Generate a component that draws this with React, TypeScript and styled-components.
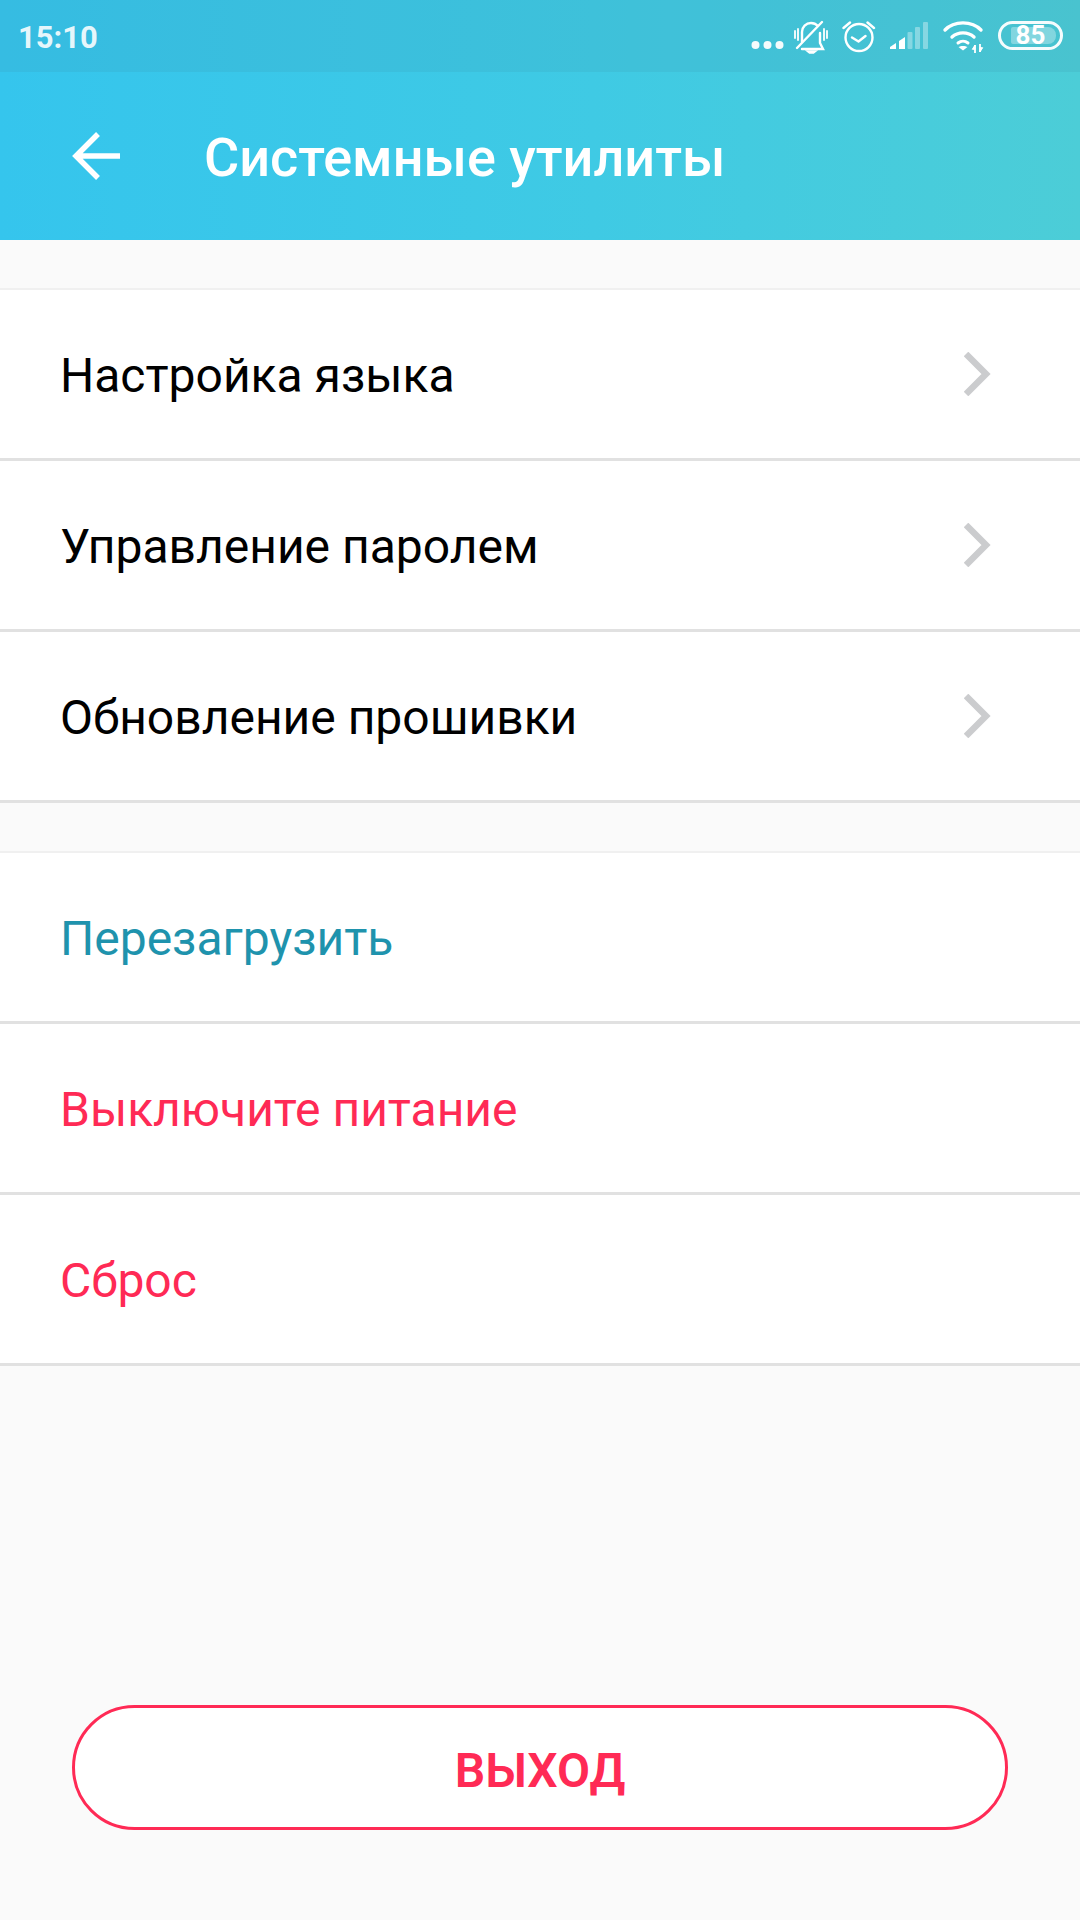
import styled, { createGlobalStyle } from 'styled-components';

const GlobalStyle = createGlobalStyle`
	html, body {
		margin: 0;
		padding: 0;
		background: #fafafa;
	}
	* {
		box-sizing: border-box;
	}
`;

const Screen = styled.div`
	width: 1080px;
	height: 1920px;
	display: flex;
	flex-direction: column;
	background: #fafafa;
	font-family: Roboto, sans-serif;
	overflow: hidden;
`;

const Top = styled.div`
	background: linear-gradient(90deg, #35c5ed 0%, #3fcae4 55%, #4ccdd7 100%);
	color: #fff;
`;

const StatusBar = styled.div`
	height: 72px;
	display: flex;
	align-items: center;
	justify-content: space-between;
	padding: 0 17px 0 18px;
	background: rgba(60, 150, 170, 0.17);
`;

const Clock = styled.span`
	font-size: 31px;
	font-weight: 700;
	color: rgba(255, 255, 255, 0.88);
	padding-top: 2px;
`;

const StatusIcons = styled.div`
	display: flex;
	align-items: center;
	gap: 14px;
	height: 72px;
`;

const DotsSvg = styled.svg`
	margin-right: -4px;
`;

const Battery = styled.div`
	position: relative;
	width: 65px;
	height: 29px;
	margin-top: -1px;
	border: 3px solid rgba(255, 255, 255, 0.95);
	border-radius: 15px;
	display: flex;
	align-items: center;
	justify-content: center;
	font-size: 26px;
	font-weight: 700;
`;

const BatteryFill = styled.div`
	position: absolute;
	left: 10px;
	top: 3px;
	bottom: 3px;
	right: 4px;
	background: rgba(255, 255, 255, 0.32);
	border-radius: 2px 8px 8px 2px;
`;

const BatteryLabel = styled.span`
	position: relative;
	line-height: 23px;
`;

const Header = styled.div`
	height: 168px;
	display: flex;
	align-items: center;
	padding-left: 72px;
	gap: 84px;
`;

const Title = styled.h1`
	margin: 0;
	padding-top: 2px;
	font-size: 54px;
	font-weight: 500;
	color: #fff;
`;

const Group = styled.div`
	margin-top: ${({ $gap }: { $gap: number }) => $gap}px;
	border-top: 2px solid #f0f0f0;
	background: #fff;
`;

const Row = styled.div`
	height: 171px;
	border-bottom: 3px solid #e1e1e1;
	display: flex;
	align-items: center;
	justify-content: space-between;
	padding: 0 89px 0 60px;
`;

const RowLabel = styled.span<{ $color: string }>`
	padding-top: 2px;
	font-size: 48px;
	color: ${({ $color }) => $color};
`;

const Footer = styled.div`
	flex: 1;
	display: flex;
	align-items: flex-end;
	padding: 0 72px 90px;
`;

const LogoutButton = styled.button`
	width: 100%;
	height: 125px;
	border: 3px solid #ff2a55;
	border-radius: 63px;
	background: #fff;
	color: #ff2a55;
	font-family: Roboto, sans-serif;
	font-size: 48px;
	font-weight: 600;
	padding: 5px 0 0;
`;

const BLUE = '#1f93ad';
const RED = '#ff2a55';
const BLACK = '#000';

const DotsIcon = () => (
	<DotsSvg width="33" height="72" viewBox="0 0 33 72" fill="#fff" opacity="0.95">
		<circle cx="4.5" cy="45" r="4" />
		<circle cx="16.5" cy="45" r="4" />
		<circle cx="28.5" cy="45" r="4" />
	</DotsSvg>
);

const BellOffIcon = () => (
	<svg width="34" height="72" viewBox="0 0 34 72" fill="none" stroke="#fff" strokeWidth="2.4" strokeLinecap="round">
		<path d="M8 42V32c0-5 4-9 9-9 3 0 5 1 7 3M26 33v10l3 6H8" />
		<path d="M13 51h9l-2.500 2h-4z" fill="#fff" strokeWidth="1.500" />
		<path d="M3 48L28 22" />
		<path d="M1 31v7M4 29v11M30 29v11M33 31v7" strokeWidth="1.8" />
	</svg>
);

const AlarmIcon = () => (
	<svg width="34" height="72" viewBox="0 0 34 72" fill="none" stroke="#fff" strokeWidth="2.4" strokeLinecap="round" strokeLinejoin="round">
		<circle cx="17" cy="37.500" r="13.500" />
		<path d="M10 37.500l6.500 4 7-5.500M1.500 28L8 22.500M25.500 22.500L32 28" />
	</svg>
);

const SignalIcon = () => (
	<svg width="38" height="72" viewBox="0 0 38 72" fill="#fff">
		<path d="M0 49v-2l6-4v6z" />
		<path d="M9 49V41l6-4v12z" />
		<g opacity="0.35">
			<rect x="17.500" y="32" width="5" height="17" rx="1" />
			<rect x="25" y="27" width="5" height="22" rx="1" />
			<rect x="33" y="22" width="5" height="27" rx="1" />
		</g>
	</svg>
);

const WifiIcon = () => (
	<svg width="42" height="72" viewBox="0 0 42 72" fill="none" stroke="#fff" strokeWidth="3.400" strokeLinecap="round">
		<path d="M3 30c9-9.500 27-9.500 36 0" />
		<path d="M10 37c6-5.500 16-5.500 22 0" />
		<path d="M16 43c3-2.500 7-2.500 10 0" strokeWidth="3" />
		<path d="M21 50.500l-4.500-3.500c2-1.500 7-1.500 9 0z" fill="#fff" stroke="none" />
		<path d="M33 45v8M38 44v8" strokeWidth="1.800" strokeLinecap="butt" />
		<path d="M30.500 49l2.500-4v4zM40.500 48l-2.500 4v-4z" fill="#fff" strokeWidth="1" />
	</svg>
);

const BackIcon = () => (
	<svg width="48" height="48" viewBox="0 0 48 48" fill="none" stroke="#fff" strokeWidth="5.500">
		<path d="M48 24H4M26 2L4 24l22 22" />
	</svg>
);

const ChevronIcon = () => (
	<svg width="27" height="44" viewBox="0 0 27 44" fill="none" stroke="#cbccce" strokeWidth="6.500">
		<path d="M2 2l20 20L2 42" />
	</svg>
);

const settingsRows = ['Настройка языка', 'Управление паролем', 'Обновление прошивки'];
const actionRows = [
	{ label: 'Перезагрузить', color: BLUE },
	{ label: 'Выключите питание', color: RED },
	{ label: 'Сброс', color: RED },
];

export default function App() {
	return (
		<Screen>
			<GlobalStyle />
			<Top>
				<StatusBar>
					<Clock>15:10</Clock>
					<StatusIcons>
						<DotsIcon />
						<BellOffIcon />
						<AlarmIcon />
						<SignalIcon />
						<WifiIcon />
						<Battery>
							<BatteryFill />
							<BatteryLabel>85</BatteryLabel>
						</Battery>
					</StatusIcons>
				</StatusBar>
				<Header>
					<BackIcon />
					<Title>Системные утилиты</Title>
				</Header>
			</Top>
			<Group $gap={48}>
				{settingsRows.map((label) => (
					<Row key={label}>
						<RowLabel $color={BLACK}>{label}</RowLabel>
						<ChevronIcon />
					</Row>
				))}
			</Group>
			<Group $gap={48}>
				{actionRows.map((row) => (
					<Row key={row.label}>
						<RowLabel $color={row.color}>{row.label}</RowLabel>
					</Row>
				))}
			</Group>
			<Footer>
				<LogoutButton>ВЫХОД</LogoutButton>
			</Footer>
		</Screen>
	);
}
